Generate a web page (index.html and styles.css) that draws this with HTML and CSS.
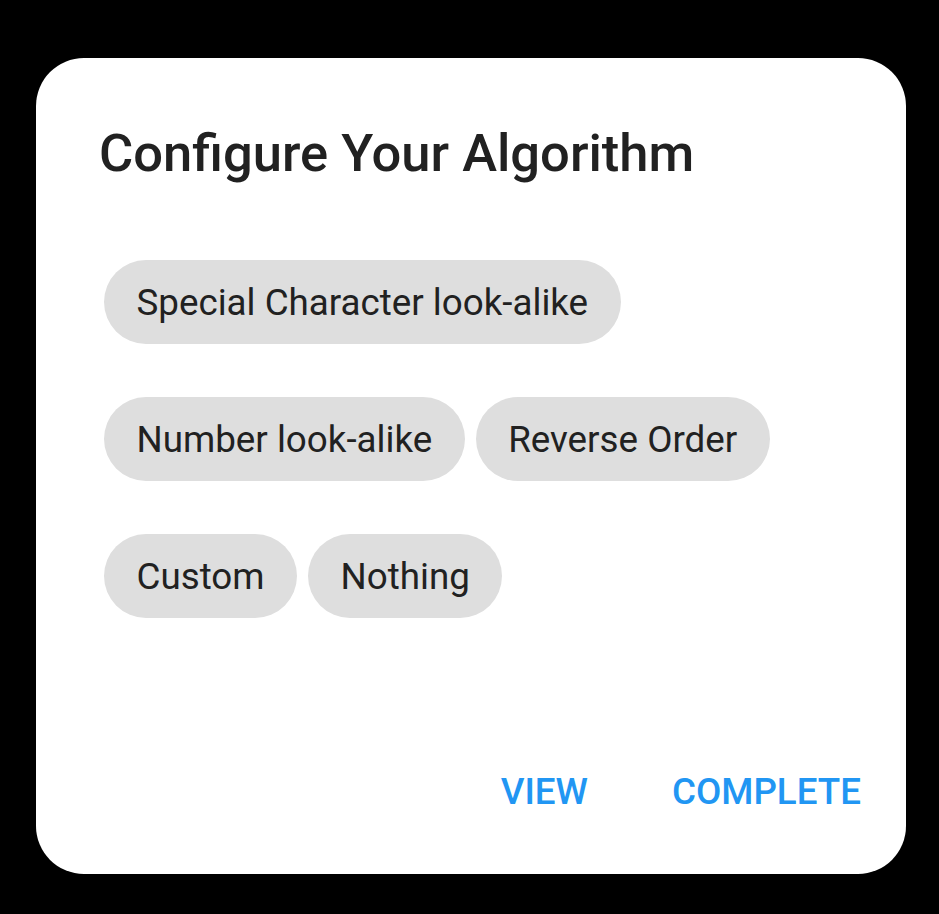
FILE: index.html
```html
<!DOCTYPE html>
<html>
<head>
<meta charset="utf-8">
<link rel="stylesheet" href="styles.css">
</head>
<body>
<div class="dialog">
  <h1 class="title">Configure Your Algorithm</h1>
  <div class="chips">
    <span class="chip">Special Character look-alike</span>
    <span class="chip">Number look-alike</span>
    <span class="chip">Reverse Order</span>
    <span class="chip">Custom</span>
    <span class="chip">Nothing</span>
  </div>
  <div class="actions">
    <button class="btn">VIEW</button>
    <button class="btn">COMPLETE</button>
  </div>
</div>
</body>
</html>
```
FILE: styles.css
```css
html, body {
  margin: 0;
  padding: 0;
  background: #000;
  height: 914px;
  overflow: hidden;
}
body {
  font-family: Roboto, "Noto Sans", sans-serif;
  padding-top: 58px;
  box-sizing: border-box;
}
.dialog {
  margin-left: 36px;
  width: 870px;
  height: 816px;
  background: #fff;
  border-radius: 48px;
  box-sizing: border-box;
  padding: 65px 0 62px 0;
  display: flex;
  flex-direction: column;
}
.title {
  margin: 0 0 0 63px;
  font-size: 52.5px;
  line-height: 60px;
  font-weight: 500;
  color: #212121;
}
.chips {
  margin: 77px 0 0 68px;
  width: 760px;
  display: flex;
  flex-wrap: wrap;
  column-gap: 11px;
  row-gap: 53px;
}
.chip {
  height: 84px;
  padding: 0 32.5px;
  border-radius: 42px;
  background: #dedede;
  color: #212121;
  font-size: 36.75px;
  display: flex;
  align-items: center;
}
.actions {
  margin-top: auto;
  display: flex;
  justify-content: flex-end;
  gap: 84px;
  padding-right: 45px;
}
.btn {
  border: none;
  background: none;
  padding: 0;
  font-family: Roboto, "Noto Sans", sans-serif;
  font-size: 36.75px;
  line-height: 40px;
  font-weight: 500;
  color: #2196f3;
}
```
